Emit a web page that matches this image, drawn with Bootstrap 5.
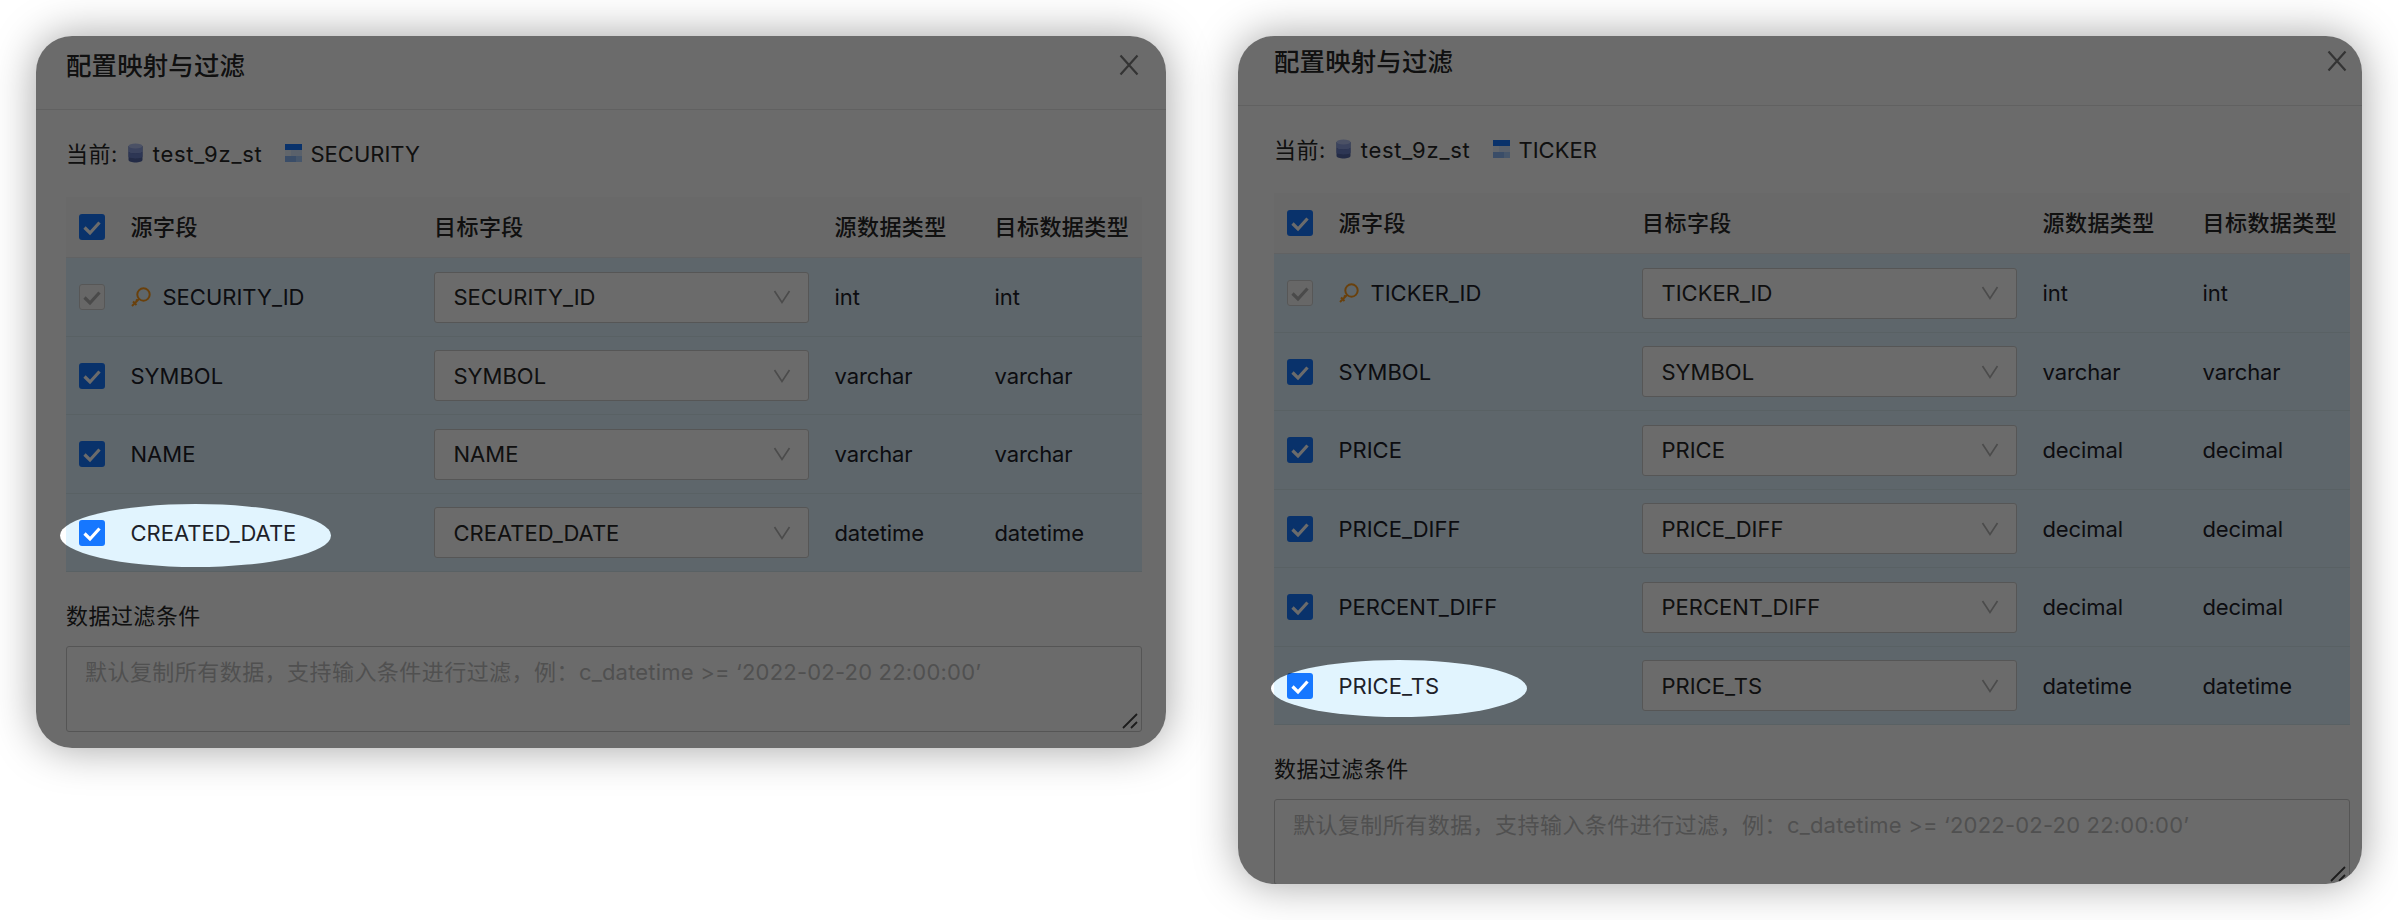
<!DOCTYPE html>
<html lang="zh-CN">
<head>
<meta charset="utf-8">
<title>配置映射与过滤</title>
<link href="https://cdn.jsdelivr.net/npm/bootstrap@5.3.0/dist/css/bootstrap.min.css" rel="stylesheet">
<script src="https://cdn.jsdelivr.net/npm/bootstrap@5.3.0/dist/js/bootstrap.bundle.min.js"></script>
<style>
body{font-family:Inter,"Noto Sans CJK SC",sans-serif;font-size:22px;line-height:34px;color:#262626;letter-spacing:0;background:#fff;overflow:hidden}
.stage{padding:36px;gap:72px;height:920px}
.panel{border-radius:36px;overflow:hidden;background:#fff;box-shadow:0 0 44px rgba(0,0,0,.37)}
.panel-a{width:1130px;height:712px}
.panel-b{width:1124px;height:848px}
.panel-head{height:74px;padding:0 27px 15px 30px;border-bottom:1.5px solid #e6e6e6}
.panel-b .panel-head{height:70px;padding:0 15px 19px 36px}
.panel-title{font-size:25.4px;font-weight:500;letter-spacing:.2px;padding-top:1px}
.panel-main{padding:0 24px 0 30px}
.panel-b .panel-main{padding:0 12px 0 36px}
.crumbs{height:87px;padding-top:1px}
.map-table{width:1076px;table-layout:fixed;border-collapse:separate;border-spacing:0;margin:0}
.map-table th{height:61px;background:#fafafa;border-bottom:1.5px solid #e6eaec;font-weight:500;padding:0 12.5px 1px;letter-spacing:.45px;white-space:nowrap;vertical-align:middle}
.map-table td{height:78.5px;background:#e1f4fe;border-bottom:1.5px solid #d3e6ef;padding:1px 12.5px 0;vertical-align:middle;white-space:nowrap;color:#1d2129}
.map-table td:nth-child(n+4){letter-spacing:-.1px}
.tick{width:26px;height:26px;border-radius:3px;background:#1677ff;display:block}
.tick-off{background:#f5f5f5;border:1.5px solid #d0d0d0}
.off-mark{color:#b0b0b0;margin:-1px}
.picker{height:51px;width:375px;border:1.5px solid #cdcdcd;border-radius:3px;background:#fff;padding:0 17px 0 18.5px;color:#262626}
.filter-label{height:50px;margin-top:19px;margin-bottom:5px;letter-spacing:.45px}
.filter-box{height:86px;border:1.5px solid #cacaca;border-radius:3px;padding:8px 18px;color:#bfbfbf;letter-spacing:.2px}
.filter-box .hint{letter-spacing:.45px}
.grip{right:3px;bottom:2px}
.key-name{margin-left:12px}
.crumb-lead{letter-spacing:.45px}
.db-mark{margin:0 10px 2px 10px}
.db-name{letter-spacing:.75px}
.tbl-mark{margin:0 9px 2px 22px}
/* dims everything except the oval */
.spot{border-radius:50%;box-shadow:0 0 0 2400px rgba(0,0,0,.58);z-index:2}
.panel-a .spot{left:24px;top:468px;width:271px;height:63px}
.panel-b .spot{left:33px;top:624px;width:256px;height:57px}
</style>
</head>
<body>
<svg class="d-none">
<symbol id="check" viewBox="0 0 26 26"><path d="M5.500 13.500l5.500 5.500 9.500-10.500" fill="none" stroke="currentColor" stroke-width="3.200"/></symbol>
<symbol id="down" viewBox="0 0 18 16"><path d="M1.500 2L9 13.500 16.500 2" fill="none" stroke="#b4b4b4" stroke-width="1.700"/></symbol>
<symbol id="key" viewBox="0 0 20 20"><g fill="none" stroke="#fa9a1e" stroke-width="2"><circle cx="12.500" cy="7.500" r="6.200"/><path d="M8 12l-7 7M2 14.500l3.500 3.500M5 12.500l2 2"/></g></symbol>
<symbol id="close" viewBox="0 0 20 22"><path d="M1.500 1.500l17 19M18.500 1.500l-17 19" stroke="#7c7c7c" stroke-width="2.200"/></symbol>
<symbol id="db" viewBox="0 0 15 20"><path d="M.5 3v14c0 3.300 14 3.300 14 0V3z" fill="#5468a8"/><path d="M.5 3v5.500c0 2.500 14 2.500 14 0V3z" fill="#8c9fe0"/><path d="M.5 8.500v5c0 2.500 14 2.500 14 0v-5c0 2.500-14 2.500-14 0z" fill="#6c80c8"/><ellipse cx="7.500" cy="3" rx="7" ry="2.600" fill="#b4c2f0"/></symbol>
<symbol id="tbl" viewBox="0 0 17 18"><path d="M0 0h17v6H0z" fill="#1677ff"/><path d="M0 6h17v6H0z" fill="#d6e6ff"/><path d="M0 12h17v6H0z" fill="#8ab8f8"/><path d="M0 6h6v6H0z" fill="#eaf2ff"/><path d="M11 12h6v6h-6z" fill="#a8ccff"/></symbol>
<symbol id="grip" viewBox="0 0 16 16"><path d="M1 15L15 1M9 15l6-6" stroke="#444" stroke-width="1.800"/></symbol>
</svg>
<main class="stage d-flex align-items-start" id="stage"></main>
<script>
const icon=(n,w,h,c='')=>`<svg class="flex-shrink-0 ${c}" width="${w}" height="${h}"><use href="#${n}"/></svg>`;
const tick=off=>`<span class="tick ${off?'tick-off':''}">${icon('check',26,26,off?'d-block off-mark':'d-block text-white')}</span>`;
const row=([name,type],i)=>`<tr><td>${tick(i===0)}</td>
<td>${i===0?`<span class="d-flex align-items-center">${icon('key',20,20)}<span class="key-name">${name}</span></span>`:name}</td>
<td><div class="picker d-flex align-items-center justify-content-between"><span>${name}</span>${icon('down',18,16)}</div></td>
<td>${type}</td><td>${type}</td></tr>`;
const panel=(kind,table,rows)=>`<section class="panel panel-${kind} position-relative flex-shrink-0">
<header class="panel-head d-flex align-items-center justify-content-between"><span class="panel-title">配置映射与过滤</span>${icon('close',20,22)}</header>
<div class="panel-main">
<div class="crumbs d-flex align-items-center"><span class="crumb-lead">当前:</span>${icon('db',15,22,'db-mark')}<span class="db-name">test_9z_st</span>${icon('tbl',17,18,'tbl-mark')}<span>${table}</span></div>
<table class="map-table"><colgroup><col style="width:52px"><col style="width:303.5px"><col style="width:400.5px"><col style="width:160px"><col style="width:160px"></colgroup>
<thead><tr><th>${tick(false)}</th><th>源字段</th><th>目标字段</th><th>源数据类型</th><th>目标数据类型</th></tr></thead>
<tbody>${rows.map(row).join('')}</tbody></table>
<div class="filter-label d-flex align-items-center">数据过滤条件</div>
<div class="filter-box position-relative"><span class="hint">默认复制所有数据，支持输入条件进行过滤，例：</span>c_datetime &gt;= ‘2022-02-20 22:00:00’${icon('grip',16,16,'grip position-absolute')}</div>
</div><div class="spot position-absolute"></div></section>`;
document.getElementById('stage').innerHTML=
panel('a','SECURITY',[['SECURITY_ID','int'],['SYMBOL','varchar'],['NAME','varchar'],['CREATED_DATE','datetime']])+
panel('b','TICKER',[['TICKER_ID','int'],['SYMBOL','varchar'],['PRICE','decimal'],['PRICE_DIFF','decimal'],['PERCENT_DIFF','decimal'],['PRICE_TS','datetime']]);
</script>
</body>
</html>
